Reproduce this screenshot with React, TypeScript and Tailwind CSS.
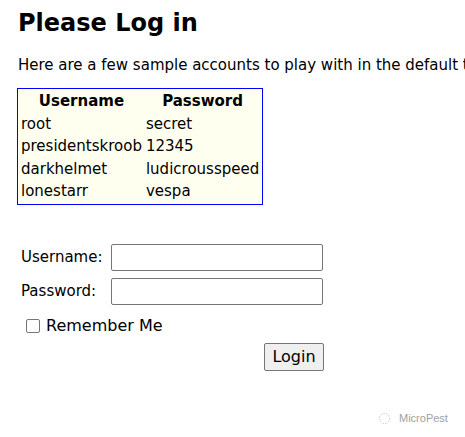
export default function App() {
  const accounts = [
    ['root', 'secret'],
    ['presidentskroob', '12345'],
    ['darkhelmet', 'ludicrousspeed'],
    ['lonestarr', 'vespa'],
  ];

  return (
    <div className="relative h-[437px] w-[465px] overflow-hidden bg-white text-black font-['DejaVu_Sans',Verdana,sans-serif]">
      <div className="pl-[18px] pt-[8px]">
        <h1 className="text-[24px] font-bold leading-[30px]">Please Log in</h1>
        <p className="mt-[17px] whitespace-nowrap text-[15px] leading-[20px]">
          Here are a few sample accounts to play with in the default text realm:
        </p>

        <table className="mt-[13px] -ml-px border-separate border-spacing-[2px] border border-[#0000ff] bg-[#fffff0] text-[15px] leading-[20.5px]">
          <thead>
            <tr>
              <th className="px-px text-center font-bold">Username</th>
              <th className="px-px text-center font-bold">Password</th>
            </tr>
          </thead>
          <tbody>
            {accounts.map(([u, p]) => (
              <tr key={u}>
                <td className="px-px">{u}</td>
                <td className="px-px">{p}</td>
              </tr>
            ))}
          </tbody>
        </table>

        <form className="mt-[39px] w-[306px] pl-[3px] text-[15px]">
          <div className="flex items-center">
            <label className="w-[90px]">Username:</label>
            <input type="text" className="h-[27px] w-[212px] rounded-[2px] border border-[#767676] px-1" />
          </div>
          <div className="mt-[7px] flex items-center">
            <label className="w-[90px]">Password:</label>
            <input type="password" className="h-[27px] w-[212px] rounded-[2px] border border-[#767676] px-1" />
          </div>
          <label className="mt-[11px] ml-[5px] flex items-center gap-[6px] text-[16px] leading-[20px]">
            <span className="inline-block h-[14px] w-[14px] rounded-[2px] border border-[#767676] bg-white" />
            Remember Me
          </label>
          <div className="mt-[7px] flex justify-end">
            <button type="button" className="h-[28px] w-[60px] rounded-[2px] border border-[#767676] bg-[#efefef] text-[16px]">
              Login
            </button>
          </div>
        </form>
      </div>

      <div className="absolute left-[378px] top-[410px] flex items-center gap-[8px] text-[11px] text-[#a0a0a0] font-['Liberation_Sans',Arial,sans-serif]">
        <svg width="13" height="13" viewBox="0 0 14 14">
          <circle cx="7" cy="7" r="5.5" fill="none" stroke="#c0c0c0" strokeWidth="1" strokeDasharray="1.5 1.5" />
        </svg>
        MicroPest
      </div>
    </div>
  );
}
